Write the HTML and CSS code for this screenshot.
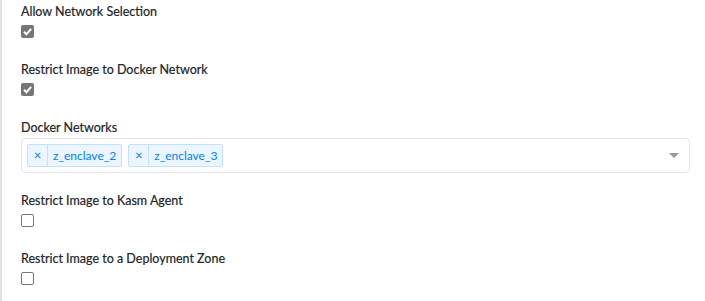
FILE: index.html
```html
<!DOCTYPE html>
<html>
<head>
<meta charset="utf-8">
<link rel="stylesheet" href="styles.css">
</head>
<body>
<div class="panel">
  <div class="group">
    <div class="label">Allow Network Selection</div>
    <span class="check checked"><svg viewBox="0 0 13 13" width="13" height="13"><path d="M3 6.8 L5.4 9.2 L10.2 3.8" fill="none" stroke="#fff" stroke-width="2"/></svg></span>
  </div>
  <div class="group">
    <div class="label">Restrict Image to Docker Network</div>
    <span class="check checked"><svg viewBox="0 0 13 13" width="13" height="13"><path d="M3 6.8 L5.4 9.2 L10.2 3.8" fill="none" stroke="#fff" stroke-width="2"/></svg></span>
  </div>
  <div class="group select-group">
    <div class="label">Docker Networks</div>
    <div class="select">
      <div class="values">
        <span class="tag"><span class="tag-x">×</span><span class="tag-label">z_enclave_2</span></span>
        <span class="tag"><span class="tag-x">×</span><span class="tag-label">z_enclave_3</span></span>
      </div>
      <span class="arrow"></span>
    </div>
  </div>
  <div class="group">
    <div class="label">Restrict Image to Kasm Agent</div>
    <span class="check"></span>
  </div>
  <div class="group">
    <div class="label">Restrict Image to a Deployment Zone</div>
    <span class="check"></span>
  </div>
</div>
</body>
</html>
```
FILE: styles.css
```css
html, body {
  margin: 0;
  background: #fff;
}
body {
  font-family: Lato, "Liberation Sans", sans-serif;
  color: #212529;
}
.panel {
  border-left: 2px solid #dee2e6;
  padding: 3px 15px 0 19px;
  height: 301px;
  box-sizing: border-box;
}
.group {
  margin-bottom: 23px;
}
.label {
  font-size: 12.5px;
  font-weight: 400;
  -webkit-text-stroke: 0.2px #212529;
  line-height: 18px;
  color: #212529;
}
.check {
  display: block;
  width: 13px;
  height: 13px;
  margin-top: 4px;
  box-sizing: border-box;
  border: 1px solid #767676;
  border-radius: 2px;
  background: #fff;
}
.check.checked {
  border: none;
  background: #767676;
}
.check svg {
  display: block;
}
.select-group {
  margin-bottom: 19px;
}
.select {
  display: flex;
  align-items: center;
  height: 35px;
  margin-top: 1px;
  box-sizing: border-box;
  border: 1px solid #e6e6e6;
  border-radius: 4px;
  padding: 0 10px 0 5px;
}
.values {
  flex: 1;
  display: flex;
  gap: 6px;
}
.tag {
  display: flex;
  align-items: stretch;
  height: 23px;
  box-sizing: border-box;
  background: #ebf5ff;
  border: 1px solid #c2e0ff;
  border-radius: 2px;
  color: #007eff;
  font-size: 12px;
  font-weight: 400;
}
.tag-x {
  width: 19px;
  display: flex;
  align-items: center;
  justify-content: center;
  border-right: 1px solid #c2e0ff;
  font-size: 13px;
  line-height: 1;
}
.tag-label {
  display: flex;
  align-items: center;
  padding: 0 5px;
}
.arrow {
  width: 0;
  height: 0;
  border-style: solid;
  border-width: 5px 5px 2.5px;
  border-color: #999 transparent transparent;
  margin-top: 2px;
}
```
